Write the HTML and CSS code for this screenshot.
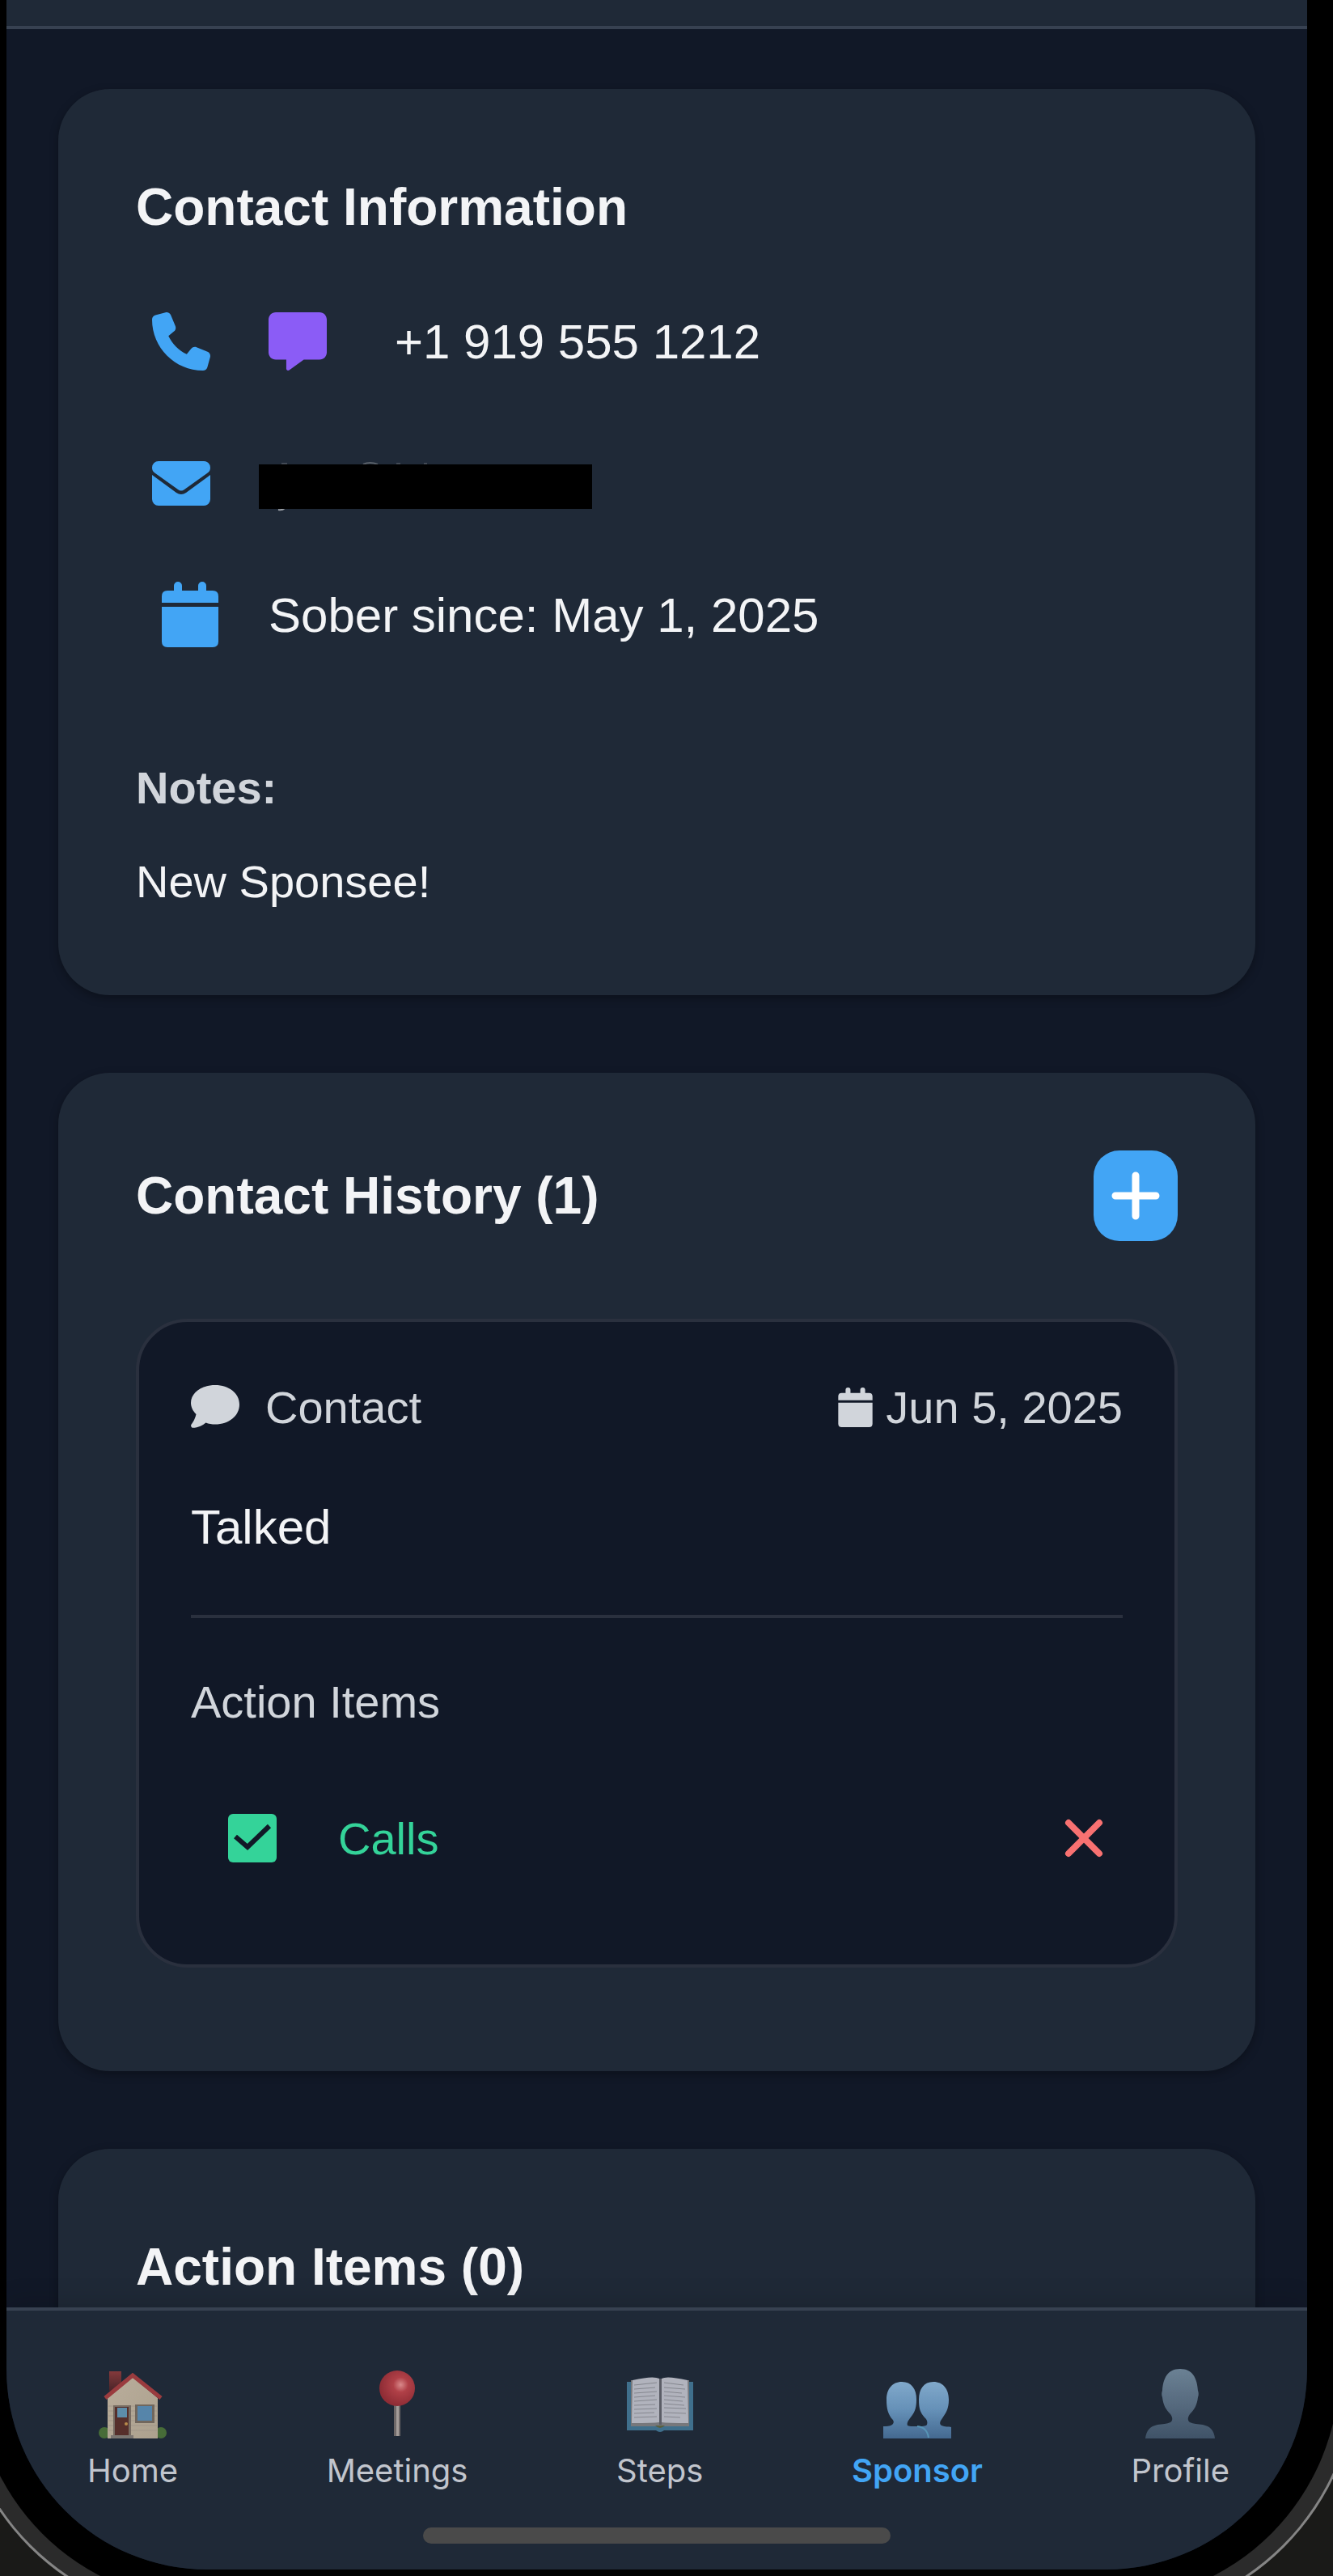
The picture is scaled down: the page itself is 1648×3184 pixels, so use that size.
FILE: index.html
```html
<!DOCTYPE html>
<html lang="en">
<head>
<meta charset="utf-8">
<meta name="viewport" content="width=device-width, initial-scale=1">
<title>Sponsor</title>
<link rel="stylesheet" href="styles.css">
</head>
<body>
<div class="screen">
  <header class="topbar"></header>

  <main class="content">
    <section class="card">
      <h2 class="card-title">Contact Information</h2>
      <div class="info-row">
        <div class="info-actions">
          <button class="icon-button" type="button" aria-label="Call">
            <svg class="icon-lg blue" viewBox="0 0 512 512"><path d="M164.900 24.600c-7.700-18.600-28-28.500-47.400-23.200l-88 24C12.100 30.200 0 46 0 64c0 247.400 200.600 448 448 448c18 0 33.800-12.100 38.600-29.500l24-88c5.300-19.400-4.600-39.700-23.200-47.400l-96-40c-16.300-6.800-35.200-2.100-46.300 11.600L304.700 368C234.300 334.700 177.300 277.700 144 207.300L193.300 167c13.700-11.200 18.400-30 11.600-46.300l-40-96z"/></svg>
          </button>
          <button class="icon-button" type="button" aria-label="Message">
            <svg class="icon-lg purple" viewBox="0 0 512 512"><path d="M64 0C28 0 0 28 0 64v288c0 36 28 64 64 64h92v80c0 12 14 20 26 12l128-92h138c36 0 64-28 64-64V64c0-36-28-64-64-64z"/></svg>
          </button>
        </div>
        <span class="info-text">+1 919 555 1212</span>
      </div>
      <div class="info-row info-row-email">
        <button class="icon-button" type="button" aria-label="Send email">
          <svg class="icon-lg blue" viewBox="0 0 72 72"><path d="M8 8h56a8 8 0 0 1 8 8c0 3-1 5-4 7L40 43q-4 3-8 0L4 23c-3-2-4-4-4-7a8 8 0 0 1 8-8z"/><path d="M0 25l30 22q6 4 12 0l30-22v30a8 8 0 0 1-8 8H8a8 8 0 0 1-8-8z"/></svg>
        </button>
        <svg class="redacted" viewBox="0 0 412 64" role="img" aria-label="Email hidden">
          <path d="M28 7h7M170 7h5M204 7h4" stroke="#424a55" stroke-width="2"/>
          <path d="M129 8q8-4 18 0" fill="none" stroke="#596069" stroke-width="2"/>
          <path d="M24 64q5 1 8-2" fill="none" stroke="#9a9fa6" stroke-width="2"/>
          <rect y="8" width="412" height="55" fill="#000"/>
        </svg>
      </div>
      <div class="info-row info-row-date">
        <svg class="icon-date blue" viewBox="0 0 72 82"><path d="M15 11V5a5 5 0 0 1 10 0v6h20V5a5 5 0 0 1 10 0v6h8q7 0 7 7v8H0v-8q0-7 7-7z"/><path d="M0 31h70v43q0 7-7 7H7q-7 0-7-7z"/></svg>
        <span class="info-text">Sober since: May 1, 2025</span>
      </div>
      <h3 class="notes-title">Notes:</h3>
      <p class="notes-text">New Sponsee!</p>
    </section>

    <section class="card">
      <div class="card-head">
        <h2 class="card-title">Contact History (1)</h2>
        <button class="add-button" type="button" aria-label="Add contact">
          <svg class="icon-plus" viewBox="0 0 60 60"><path d="M30 5v50M5 30h50" fill="none" stroke="#fff" stroke-width="9" stroke-linecap="round"/></svg>
        </button>
      </div>
      <article class="entry">
        <div class="entry-head">
          <span class="entry-type">
            <svg class="icon-comment" viewBox="0 0 60 54"><path d="M30 0C13 0 0 9.500 0 22c0 5 2.500 10 6.500 14C5 43 1 48 0.500 48.800c-1 1.200 0 4 1.500 4 7.500 0 13-3.500 16.500-6.300C22 48 26 48.500 30 48.500c17 0 30-10.500 30-24.500S47 0 30 0z"/></svg>
            Contact
          </span>
          <time class="entry-date" datetime="2025-06-05">
            <svg class="icon-day" viewBox="0 0 70 81"><path d="M15 11V5a5 5 0 0 1 10 0v6h20V5a5 5 0 0 1 10 0v6h8q7 0 7 7v8H0v-8q0-7 7-7z"/><path d="M0 31h70v43q0 7-7 7H7q-7 0-7-7z"/></svg>
            Jun 5, 2025
          </time>
        </div>
        <p class="entry-note">Talked</p>
        <div class="entry-tasks">
          <h3 class="tasks-title">Action Items</h3>
          <div class="task">
            <label class="task-label">
              <input class="task-check" type="checkbox" checked>
              <svg class="task-mark" viewBox="0 0 60 60"><rect width="60" height="60" rx="6"/><path d="M9 28l15 13 27-26" fill="none" stroke="#111827" stroke-width="6"/></svg>
              Calls
            </label>
            <button class="task-delete" type="button" aria-label="Delete Calls">
              <svg class="icon-x" viewBox="0 0 48 48"><path d="M5 5l38 38M43 5L5 43" fill="none" stroke="#f87171" stroke-width="8" stroke-linecap="round"/></svg>
            </button>
          </div>
        </div>
      </article>
    </section>

    <section class="card">
      <h2 class="card-title">Action Items (0)</h2>
    </section>
  </main>

  <footer class="bottom">
    <nav class="tabs">
      <a class="tab" href="#home">
        <svg class="tab-icon" viewBox="0 0 88 88">
          <defs><linearGradient id="wall" x1="0" y1="0" x2="1" y2="1"><stop offset="0" stop-color="#b9ad9b"/><stop offset="1" stop-color="#aca18e"/></linearGradient>
          <linearGradient id="chimney" x1="0" y1="0" x2="0" y2="1"><stop offset="0" stop-color="#84393b"/><stop offset="1" stop-color="#4a2529"/></linearGradient></defs>
          <rect x="15" y="3" width="15" height="24" fill="url(#chimney)"/>
          <circle cx="9" cy="79" r="7" fill="#476c38"/><circle cx="79" cy="79" r="7" fill="#476c38"/>
          <path d="M13 36L44 10l31 26v50H13z" fill="url(#wall)"/>
          <path d="M14 46h60M14 52h60M14 58h60M14 64h60M14 70h60M14 76h60" stroke="#a2978a" stroke-width="1"/>
          <path d="M10 36L44 8l35 28" fill="none" stroke="#9a3b3e" stroke-width="5"/>
          <path d="M20 45h22v38H20z" fill="#776c62"/><path d="M22 47h17v36H22z" fill="#562f2b"/>
          <rect x="25" y="48" width="12" height="12" fill="#5d8daa"/><circle cx="36" cy="68" r="2" fill="#b88b4b"/>
          <path d="M17 82h28v4H17z" fill="#7b7671"/>
          <rect x="47" y="44" width="24" height="23" fill="#71675d"/><rect x="50" y="46" width="18" height="18" fill="#5685aa"/>
        </svg>
        <span>Home</span>
      </a>
      <a class="tab" href="#meetings">
        <svg class="tab-icon" viewBox="0 0 88 88">
          <defs><radialGradient id="pin" cx=".6" cy=".4" r=".6"><stop offset="0" stop-color="#d9898a"/><stop offset=".35" stop-color="#b04047"/><stop offset="1" stop-color="#8e2c35"/></radialGradient></defs>
          <path d="M40 42h8v41h-8z" fill="#6e6868"/><path d="M43 42h3v41h-3z" fill="#a39c99"/>
          <circle cx="44" cy="24" r="22" fill="url(#pin)"/>
        </svg>
        <span>Meetings</span>
      </a>
      <a class="tab" href="#steps">
        <svg class="tab-icon" viewBox="0 0 88 88">
          <path d="M3 16h82v60H49q-5 4-10 0H3z" fill="#3f6f8c"/>
          <path d="M8 14L8 71h72V14z" fill="#77787c"/>
          <path d="M10 14Q36 8 43 12v54q-7 1-34 1zM78 14Q52 8 46 12v54q7 1 33 1z" fill="#b1b3bd"/>
          <path d="M43 12h3v57h-3z" fill="#5b5d66"/>
          <path d="M12 20l28-3M12 25l26-2M12 30l28-2M12 35l26-2M12 40l28-2M12 45l26-1M12 50l28-1M12 55l25-1M12 60l28-1M49 17l24 3M49 23l26 2M49 28l22 2M49 33l26 2M49 38l23 2M49 43l25 2M49 48l27 1M49 54l27 1M49 59l20 1" stroke="#85878f" stroke-width="1"/>
          <path d="M38 70h12q-6 6-12 0z" fill="#5a6040"/>
        </svg>
        <span>Steps</span>
      </a>
      <a class="tab tab-active" href="#sponsor" aria-current="page">
        <svg class="tab-icon" viewBox="0 0 88 88">
          <defs><linearGradient id="pair" x1="0" y1="0" x2="0" y2="1"><stop offset="0" stop-color="#81a9cb"/><stop offset=".5" stop-color="#6590b7"/><stop offset="1" stop-color="#446990"/></linearGradient></defs>
          <path d="M25 16c12 0 18 9 18 22 0 12-3 17-8 23-3 4-4 6-3 9 1 1 6 1 12 1 6 0 10 0 12-2 1-4 0-6-3-9-5-6-7-10-7-22 0-13 6-22 18-22s19 9 19 22c0 12-4 17-8 23-3 4-4 7-1 9 4 2 9 1 12 2v14H2V71c4 0 8 0 11-2 3-3 2-5-1-8-4-6-6-11-6-23 0-13 7-22 19-22z" fill="url(#pair)"/>
          <path d="M44 71q12 1 14 14" fill="none" stroke="#5794b5" stroke-width="2"/>
        </svg>
        <span>Sponsor</span>
      </a>
      <a class="tab" href="#profile">
        <svg class="tab-icon" viewBox="0 0 88 88">
          <defs><linearGradient id="solo" x1="0" y1="0" x2="0" y2="1"><stop offset="0" stop-color="#6b8194"/><stop offset=".5" stop-color="#566a7e"/><stop offset="1" stop-color="#405368"/></linearGradient></defs>
          <path d="M44 0c15 0 21 11 22 27 1 2 1 6 0 8-1 10-5 16-10 21-3 4-3 8 0 10 4 2 10 2 16 3 9 2 14 7 15 17H1c1-10 6-15 15-17 6-1 12-1 16-3 3-2 3-6 0-10-5-5-9-11-10-21-1-2-1-6 0-8C23 11 29 0 44 0z" fill="url(#solo)"/>
        </svg>
        <span>Profile</span>
      </a>
    </nav>
    <div class="home-indicator"></div>
  </footer>
</div>
</body>
</html>
```
FILE: styles.css
```css
* {
  box-sizing: border-box;
  margin: 0;
  padding: 0;
}

body {
  height: 100vh;
  padding: 0 32px 8px 8px;
  overflow: hidden;
  background: #1a1a18;
  color: #f3f4f6;
  font-family: "Liberation Sans", Arial, Helvetica, sans-serif;
}

svg {
  display: block;
  flex: none;
  fill: currentColor;
  overflow: visible;
}

button {
  border: 0;
  background: none;
  cursor: pointer;
}

.blue { color: #42a5f5; }
.purple { color: #8b5cf6; }

/* Phone screen with its bezel rings */
.screen {
  display: flex;
  flex-direction: column;
  height: 100%;
  background: #111827;
  border-radius: 0 0 248px 248px;
  box-shadow: 0 0 0 40px #000, 0 0 0 60px #2b2b2b, 0 0 0 63px #858585;
}

.topbar {
  flex: none;
  height: 36px;
  background: #1f2937;
  border-bottom: 4px solid #374151;
}

.content {
  display: flex;
  flex: 1;
  flex-direction: column;
  gap: 96px;
  min-height: 0;
  padding: 74px 64px 0;
  overflow-y: auto;
  scrollbar-width: none;
}

.card {
  flex: none;
  padding: 96px;
  background: #1f2937;
  border-radius: 64px;
  box-shadow: 0 4px 12px rgba(0, 0, 0, 0.3);
}

.card-title {
  font-size: 64px;
  line-height: 100px;
}

/* Contact information */
.info-row {
  display: flex;
  align-items: center;
  gap: 64px;
  height: 176px;
}

.card-title + .info-row { margin-top: 28px; }

.info-row-email { gap: 40px; }

.info-row-date {
  gap: 60px;
  height: 148px;
  padding-left: 32px;
}

.info-actions {
  display: flex;
  gap: 32px;
}

.icon-button { padding: 20px; }

.icon-lg {
  width: 72px;
  height: 72px;
}

.icon-date {
  width: 72px;
  height: 82px;
}

.redacted {
  width: 412px;
  height: 64px;
}

.info-text { font-size: 60px; }

.notes-title,
.notes-text {
  font-size: 56px;
  line-height: 88px;
}

.notes-title {
  margin: 96px 0 28px;
  color: #d1d5db;
}

/* Contact history */
.card-head {
  display: flex;
  align-items: center;
  justify-content: space-between;
  margin-bottom: 96px;
}

.add-button {
  padding: 26px 22px;
  background: #42a5f5;
  border-radius: 32px;
}

.icon-plus {
  width: 60px;
  height: 60px;
}

.entry {
  margin-bottom: 32px;
  padding: 64px 64px 92px;
  background: #111827;
  border: 4px solid #2a303e;
  border-radius: 64px;
}

.entry-head,
.entry-type,
.entry-date,
.task,
.task-label {
  display: flex;
  align-items: center;
}

.entry-head {
  justify-content: space-between;
  height: 82px;
  color: #d1d5db;
  font-size: 56px;
}

.entry-type { gap: 32px; }
.entry-date { gap: 16px; }

.icon-comment {
  width: 60px;
  height: 54px;
}

.icon-day {
  width: 43px;
  height: 49px;
}

.entry-note {
  margin: 64px 0;
  font-size: 60px;
  line-height: 88px;
}

.entry-tasks {
  padding-top: 64px;
  border-top: 4px solid #2a303e;
}

.tasks-title {
  color: #d1d5db;
  font-size: 56px;
  font-weight: 400;
  line-height: 80px;
}

.task {
  justify-content: space-between;
  height: 128px;
  margin-top: 64px;
  padding: 0 24px 0 46px;
}

.task-label {
  gap: 76px;
  color: #34d399;
  font-size: 56px;
}

.task-check {
  position: absolute;
  width: 60px;
  height: 60px;
  opacity: 0;
}

.task-mark {
  width: 60px;
  height: 60px;
}

.icon-x {
  width: 48px;
  height: 48px;
}

/* Bottom tabs */
.bottom {
  flex: none;
  padding-bottom: 32px;
  background: #1f2937;
  border-top: 4px solid #374151;
  border-radius: 0 0 248px 248px;
  box-shadow: 0 -8px 32px rgba(0, 0, 0, 0.12);
}

.tabs {
  display: flex;
  justify-content: space-between;
  padding: 72px 96px 46px 100px;
}

.tab {
  display: flex;
  flex-direction: column;
  align-items: center;
  gap: 14px;
  color: #c1c5cd;
  font: 400 40px/48px Inter, Roboto, sans-serif;
  text-decoration: none;
}

.tab-active {
  color: #42a5f5;
  font-weight: 600;
}

.tab-icon {
  width: 88px;
  height: 88px;
}

.home-indicator {
  width: 36%;
  height: 20px;
  margin: 0 auto;
  background: #4a4a4a;
  border-radius: 10px;
}
```
